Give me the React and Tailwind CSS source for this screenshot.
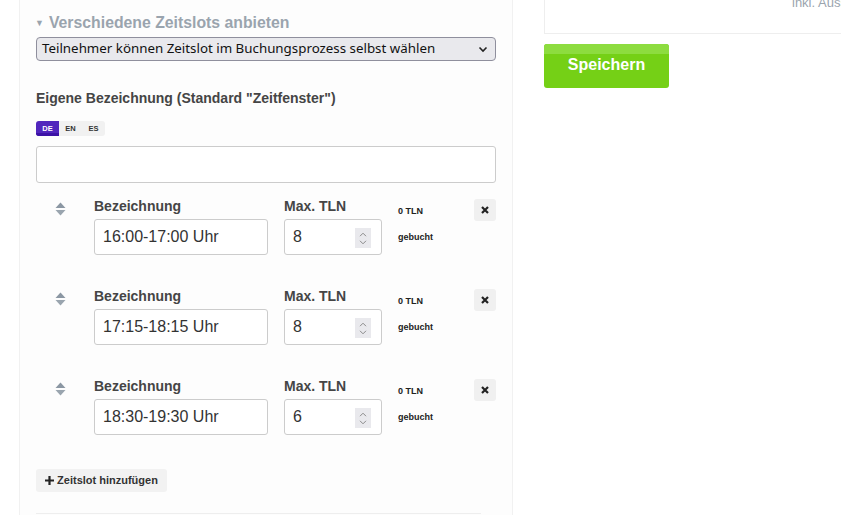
import React from "react";

function SortIcon() {
  return (
    <svg width="11" height="14" viewBox="0 0 11 14" className="block">
      <path d="M5.5 0.5 L10.5 6 L0.5 6 Z" fill="#8b97a3" />
      <path d="M0.5 8 L10.5 8 L5.5 13.5 Z" fill="#9aa5af" />
    </svg>
  );
}

function Spinner() {
  return (
    <span className="absolute right-[10px] top-[8px] w-[16px] h-[20px] bg-[#e9e9ed] flex flex-col items-center justify-center gap-[3px]">
      <svg width="8" height="5" viewBox="0 0 8 5">
        <path d="M1 4.2 L4 1.2 L7 4.2" stroke="#8a8a8a" strokeWidth="1" fill="none" />
      </svg>
      <svg width="8" height="5" viewBox="0 0 8 5">
        <path d="M1 0.8 L4 3.8 L7 0.8" stroke="#8a8a8a" strokeWidth="1" fill="none" />
      </svg>
    </span>
  );
}

function SlotRow({ label, max }) {
  return (
    <div className="flex">
      <div className="w-[58px] pl-[19px] pt-[6px]">
        <SortIcon />
      </div>
      <div className="w-[174px] flex flex-col gap-[3px]">
        <div className="h-[20px] leading-[20px] text-[14px] font-bold text-[#454545]">Bezeichnung</div>
        <div className="h-[36px] border border-[#cccccc] rounded-[3px] bg-white px-[8px] flex items-center text-[16px] text-[#333]">
          {label}
        </div>
      </div>
      <div className="w-[98px] ml-[16px] flex flex-col gap-[3px]">
        <div className="h-[20px] leading-[20px] text-[14px] font-bold text-[#454545]">Max. TLN</div>
        <div className="relative h-[36px] border border-[#cccccc] rounded-[3px] bg-white px-[8px] flex items-center text-[16px] text-[#333]">
          {max}
          <Spinner />
        </div>
      </div>
      <div className="ml-[16px] flex-1 flex flex-col text-[9px] font-bold text-[#222] pt-[10px]">
        <div className="leading-[10px]">0 TLN</div>
        <div className="leading-[10px] mt-[16px]">gebucht</div>
      </div>
      <div className="pt-[3px]">
        <div className="w-[22px] h-[22px] bg-[#f0f0f0] rounded-[3px] flex items-center justify-center">
          <svg width="8" height="8" viewBox="0 0 8 8">
            <path d="M1 1 L7 7 M7 1 L1 7" stroke="#222" strokeWidth="2.2" strokeLinecap="butt" />
          </svg>
        </div>
      </div>
    </div>
  );
}

export default function App() {
  return (
    <div className="w-[841px] h-[515px] overflow-hidden bg-white flex font-['Liberation_Sans',Arial,sans-serif]">
      <div className="w-[19px] shrink-0" />
      <div className="w-[494px] shrink-0 border-x border-[#f1f1f1] bg-[#fdfdfd] px-[16px] pt-[12px]">
        <div className="mt-[1px] h-[20px] leading-[20px] text-[15.8px] font-bold text-[#9aa4ae] flex items-center">
          <span className="text-[9px] mr-[5px] -ml-[1px]">▼</span>
          Verschiedene Zeitslots anbieten
        </div>
        <div className="mt-[4px] h-[24px] w-[460px] rounded-[4px] border border-[#8f8f9d] bg-[#e9e9ed] flex items-center justify-between pl-[5px] pr-[7px] font-['Noto_Sans',sans-serif] text-[13.33px] text-[#111]">
          <span>Teilnehmer können Zeitslot im Buchungsprozess selbst wählen</span>
          <svg width="10" height="7" viewBox="0 0 10 7">
            <path d="M1.5 1.5 L5 5 L8.5 1.5" stroke="#222" strokeWidth="1.6" fill="none" />
          </svg>
        </div>
        <div className="mt-[27px] h-[20px] leading-[20px] text-[14px] font-bold text-[#454545]">
          Eigene Bezeichnung (Standard "Zeitfenster")
        </div>
        <div className="mt-[13px] flex h-[15px] w-[69px] rounded-[3px] overflow-hidden bg-[#f1f1f1] text-[7.5px] font-bold">
          <div className="w-[23px] flex items-center justify-center text-white bg-[#5126bd] border-b-[3px] border-[#3c12a6] pt-[3px]">DE</div>
          <div className="w-[23px] flex items-center justify-center text-[#333]">EN</div>
          <div className="w-[23px] flex items-center justify-center text-[#333]">ES</div>
        </div>
        <div className="mt-[10px] h-[37px] w-[460px] border border-[#cccccc] rounded-[3px] bg-white" />
        <div className="mt-[13px] flex flex-col gap-[31px]">
          <SlotRow label="16:00-17:00 Uhr" max="8" />
          <SlotRow label="17:15-18:15 Uhr" max="8" />
          <SlotRow label="18:30-19:30 Uhr" max="6" />
        </div>
        <div className="mt-[34px] h-[23px] w-[131px] rounded-[3px] bg-[#f2f2f2] flex items-center justify-center text-[11px] font-bold text-[#333]">
          <svg width="9" height="9" viewBox="0 0 9 9" className="mr-[3px]">
            <path d="M4.5 0 V9 M0 4.5 H9" stroke="#222" strokeWidth="2.2" />
          </svg>
          Zeitslot hinzufügen
        </div>
        <div className="mt-[21px] h-[1px] w-[445px] bg-[#eeeeee]" />
      </div>
      <div className="w-[31px] shrink-0" />
      <div className="flex-1 min-w-0 flex flex-col">
        <div className="h-[34px] border-l border-b border-[#eeeeee] overflow-hidden relative">
          <div className="absolute left-[247px] top-[-7px] whitespace-nowrap text-[13px] text-[#9aa4ae]">inkl. Ausstellergebühr</div>
        </div>
        <div className="mt-[10px] w-[125px] h-[44px] rounded-[3px] overflow-hidden bg-[#75d016] relative">
          <div className="h-[10px] bg-[#8ddc3f]" />
          <div className="absolute inset-0 flex justify-center pt-[9px] text-[16px] font-bold text-white">Speichern</div>
        </div>
      </div>
    </div>
  );
}
